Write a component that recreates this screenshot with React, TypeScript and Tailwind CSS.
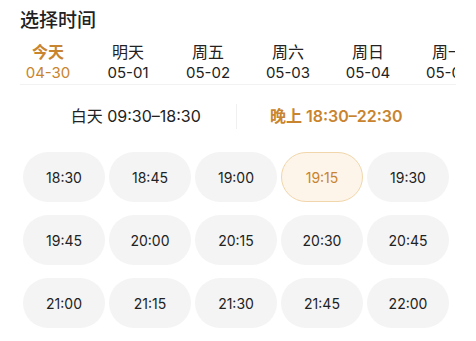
import React from "react";

const days = [
  { n: "今天", d: "04-30" },
  { n: "明天", d: "05-01" },
  { n: "周五", d: "05-02" },
  { n: "周六", d: "05-03" },
  { n: "周日", d: "05-04" },
  { n: "周一", d: "05-05" },
];

const times = [
  "18:30", "18:45", "19:00", "19:15", "19:30",
  "19:45", "20:00", "20:15", "20:30", "20:45",
  "21:00", "21:15", "21:30", "21:45", "22:00",
];

export default function App() {
  return (
    <div
      className="w-[476px] h-[341px] bg-white overflow-hidden text-[#222]"
      style={{ fontFamily: '"Inter", "Noto Sans CJK SC", sans-serif' }}
    >
      <div className="pl-[20px] pt-[9px] h-[40px] text-[19px] leading-[24px] font-medium">选择时间</div>
      <div className="flex w-[455px] pl-[8px] pt-[2px] overflow-hidden h-[44px]">
        {days.map((x, i) => (
          <div key={i} className="w-[80px] shrink-0 flex flex-col items-center">
            <div className={`text-[16px] leading-[20px] ${i === 0 ? "text-[#c8842e] font-semibold" : ""}`}>{x.n}</div>
            <div className={`text-[15px] leading-[20px] mt-[1px] ${i === 0 ? "text-[#c8842e]" : ""}`}>{x.d}</div>
          </div>
        ))}
      </div>
      <div className="ml-[20px] w-[436px] h-px bg-[#f2f2f2]" />
      <div className="ml-[36px] w-[400px] flex items-center h-[62px]">
        <div className="flex-1 text-center text-[16px]">白天 09:30–18:30</div>
        <div className="w-px h-[25px] bg-[#f0f0f0]" />
        <div className="flex-1 text-center text-[16px] font-semibold text-[#c8842e]">晚上 18:30–22:30</div>
      </div>
      <div className="ml-[23px] mt-[5px] grid grid-cols-[repeat(5,82px)] gap-x-[4px] gap-y-[13px]">
        {times.map((t) => (
          <div
            key={t}
            className={`h-[50px] rounded-[25px] flex items-center justify-center text-[14px] ${
              t === "19:15"
                ? "bg-[#fdf5e9] border border-[#f1d6ab] text-[#c8842e]"
                : "bg-[#f4f4f4]"
            }`}
          >
            {t}
          </div>
        ))}
      </div>
    </div>
  );
}
